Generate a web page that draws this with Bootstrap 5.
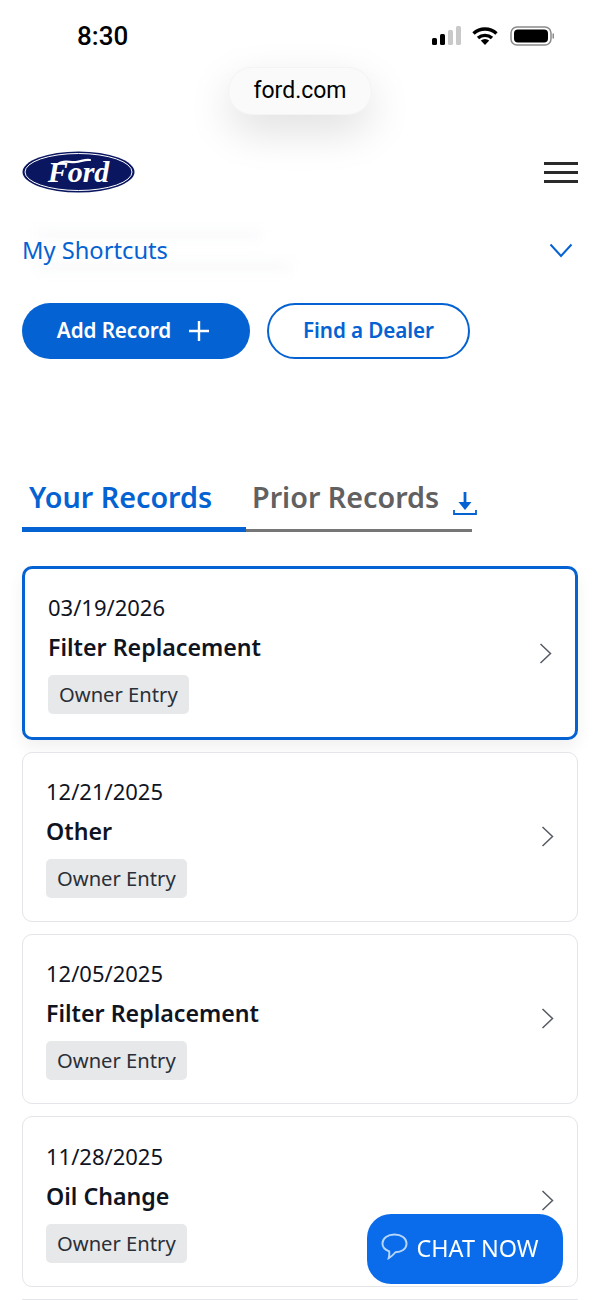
<!DOCTYPE html>
<html lang="en">
<head>
    <meta charset="UTF-8" />
    <meta name="viewport" content="width=device-width, initial-scale=1.0"/>
    <title>Ford - Service Records</title>
    <link href="https://cdn.jsdelivr.net/npm/bootstrap@5.3.2/dist/css/bootstrap.min.css" rel="stylesheet"/>
    <style>
        html, body { height: 1300px; overflow: hidden; }
        body { font-family: "Noto Sans", "Open Sans", sans-serif; color: #10141f; background: #fff; }
        .status-row { height: 67px; padding: 21px 45px 0 77px; }
        .status-time { font-family: Roboto, sans-serif; font-weight: 500; font-size: 26px; line-height: 30px; color: #000; }
        .url-wrap { height: 84px; }
        .url-pill { width: 144px; height: 48px; padding-top: 1px; border-radius: 24px; background: #fafafa; border: 1px solid #f4f4f4; box-shadow: 0 16px 44px rgba(0,0,0,.13); font-family: Roboto, sans-serif; font-size: 23px; color: #000; }
        .top-row { height: 42px; padding: 0 22px; }
        .ford-text { font-family: "Liberation Serif", serif; font-style: italic; font-weight: 700; font-size: 30px; fill: #fff; }
        .burger { width: 34px; }
        .burger span { display: block; height: 3px; background: #2a2a2a; margin-bottom: 6px; }
        .burger span:last-child { margin-bottom: 0; }
        .shortcut-row { position: relative; margin-top: 37px; height: 40px; padding: 0 22px; }
        .ghost-line { position: absolute; left: 36px; height: 9px; background: #f8f9fb; filter: blur(6px); }
        .ghost-one { top: 0; width: 225px; }
        .ghost-two { top: 32px; width: 255px; }
        .shortcut-title { position: relative; font-size: 23.7px; line-height: 40px; color: #0562d2; }
        .shortcut-arrow { margin-right: 5px; }
        .action-row { margin-top: 33px; padding: 0 22px; gap: 17px; }
        .btn-ford { height: 56px; border-radius: 28px; font-size: 20.7px; font-weight: 600; padding: 0; display: flex; align-items: center; justify-content: center; letter-spacing: -.1px; }
        .btn-add { width: 228px; padding-right: 5px; background: #0562d2; color: #fff; gap: 17px; border: 0; }
        .btn-add:hover { background: #0562d2; color: #fff; }
        .btn-dealer { width: 203px; background: #fff; color: #0562d2; border: 2px solid #0562d2; }
        .tab-row { margin: 111px 0 0 22px; width: 450px; height: 62px; }
        .tab-item { font-size: 28.7px; font-weight: 600; line-height: 54px; height: 62px; white-space: nowrap; }
        .tab-on { width: 224px; padding-left: 7px; color: #0562d2; border-bottom: 5px solid #0562d2; }
        .tab-off { width: 226px; padding-left: 6px; color: #616161; border-bottom: 3px solid #767676; position: relative; }
        .tab-download { position: absolute; right: -5px; top: 22px; }
        .record-list { margin-top: 34px; padding: 0 22px; gap: 12px; }
        .record-card { height: 170px; border: 1.5px solid #e3e5e8; border-radius: 10px; padding: 22px 23px 0; }
        .record-active { height: 174px; padding: 22px 24px 0 23px; border: 3px solid #0562d2; box-shadow: 0 8px 16px rgba(0,0,0,.06); }
        .record-last { height: 171px; padding-top: 23px; }
        .record-peek { height: 2px; padding: 0; border-bottom: 0; }
        .record-date { font-size: 22px; line-height: 32px; }
        .record-title { font-size: 23.2px; line-height: 32px; font-weight: 600; margin-top: 8px; }
        .record-chip { display: inline-block; margin-top: 12px; height: 39px; padding: 0 11px; border-radius: 5px; background: #e6e8ea; font-size: 20.2px; line-height: 39px; color: #2b2f38; }
        .record-arrow { position: absolute; right: 23px; top: 73px; }
        .record-active .record-arrow { top: 74px; }
        .chat-btn { position: fixed; left: 367px; top: 1214px; width: 196px; height: 70px; padding: 0 10px 0 0; border-radius: 24px; background: #0a6ceb; color: #fff; font-size: 23.4px; gap: 8px; z-index: 5; }
        .chat-icon { margin-bottom: 7px; }
    </style>
</head>
<body>
    <div class="status-row d-flex justify-content-between">
        <span class="status-time">8:30</span>
        <svg class="mt-1" width="124" height="22" viewBox="0 0 124 22">
            <rect x="1" y="13" width="5" height="7" rx="1.5" fill="#000"/>
            <rect x="9" y="9" width="5" height="11" rx="1.5" fill="#000"/>
            <rect x="17" y="5" width="5" height="15" rx="1.5" fill="#c9c9c9"/>
            <rect x="25" y="1" width="5" height="19" rx="1.5" fill="#c9c9c9"/>
            <path d="M42.5 8.5a17 17 0 0 1 23 0" fill="none" stroke="#000" stroke-width="3.4"/>
            <path d="M47 13a10.5 10.5 0 0 1 14 0" fill="none" stroke="#000" stroke-width="3.4"/>
            <path d="M54 20l-4.2-4.4a6 6 0 0 1 8.4 0z" fill="#000"/>
            <rect x="80" y="2" width="40" height="18" rx="6" fill="none" stroke="#8a8a8a" stroke-width="1.5"/>
            <rect x="83" y="4.5" width="34" height="13" rx="4" fill="#000"/>
            <rect x="121.500" y="8.500" width="1.500" height="5" fill="#8a8a8a"/>
        </svg>
    </div>

    <div class="url-wrap d-flex justify-content-center">
        <div class="url-pill d-flex align-items-center justify-content-center">ford.com</div>
    </div>

    <div class="top-row d-flex justify-content-between align-items-center">
        <svg width="113" height="42" viewBox="0 0 113 42">
            <ellipse cx="56.500" cy="21" rx="56" ry="20.500" fill="#0a1660"/>
            <ellipse cx="56.500" cy="21" rx="53.500" ry="18.500" fill="none" stroke="#fff" stroke-width="1"/>
            <text class="ford-text" x="56.500" y="31" text-anchor="middle">Ford</text>
            <path d="M36 13c6-5 12-1 18-2s10-3 14-2" fill="none" stroke="#fff" stroke-width="2.200" stroke-linecap="round"/>
        </svg>
        <div class="burger"><span></span><span></span><span></span></div>
    </div>

    <div class="shortcut-row d-flex justify-content-between align-items-center">
        <div class="ghost-line ghost-one"></div>
        <div class="ghost-line ghost-two"></div>
        <span class="shortcut-title">My Shortcuts</span>
        <svg class="shortcut-arrow" width="24" height="15" viewBox="0 0 24 15"><path d="M1.500 1.500L12 13 22.500 1.500" fill="none" stroke="#0562d2" stroke-width="2"/></svg>
    </div>

    <div class="action-row d-flex">
        <button class="btn btn-ford btn-add">Add Record
            <svg width="22" height="22" viewBox="0 0 22 22"><path d="M11 1v20M1 11h20" stroke="#fff" stroke-width="2.4"/></svg>
        </button>
        <button class="btn btn-ford btn-dealer">Find a Dealer</button>
    </div>

    <div class="tab-row d-flex">
        <div class="tab-item tab-on">Your Records</div>
        <div class="tab-item tab-off">Prior Records
            <svg class="tab-download" width="24" height="24" viewBox="0 0 24 24">
                <path d="M12 0v12" stroke="#0562d2" stroke-width="2.800"/>
                <path d="M5.500 10h13L12 18z" fill="#0562d2"/>
                <path d="M1 18v4h22v-4" fill="none" stroke="#0562d2" stroke-width="1.800"/>
            </svg>
        </div>
    </div>

    <div class="record-list d-flex flex-column" id="records"></div>

    <a class="chat-btn btn d-flex align-items-center justify-content-center">
        <svg class="chat-icon" width="27" height="28" viewBox="0 0 28 28"><path d="M14 2c7 0 12.500 3.800 12.500 9.500S21 20.500 15 20.500c-2 2.500-4.500 4.500-7 6 .5-2 .8-4 .5-7C4 18 1.500 15 1.500 11.500 1.500 6 7 2 14 2z" fill="none" stroke="#b5d5fb" stroke-width="2"/></svg>
        CHAT NOW
    </a>

    <script>
        const records = [
            { date: "03/19/2026", title: "Filter Replacement", extra: "record-active" },
            { date: "12/21/2025", title: "Other" },
            { date: "12/05/2025", title: "Filter Replacement" },
            { date: "11/28/2025", title: "Oil Change", extra: "record-last" }
        ];

        // last card only peeks in at the bottom edge, so no text in it
        document.getElementById("records").innerHTML = records.map(r => `
            <div class="card record-card ${r.extra || ""}">
                <div class="record-date">${r.date}</div>
                <div class="record-title">${r.title}</div>
                <div><span class="record-chip">Owner Entry</span></div>
                <svg class="record-arrow" width="13" height="21" viewBox="0 0 13 21"><path d="M1.500 1l10 9.500-10 9.500" fill="none" stroke="#555a63" stroke-width="1.500"/></svg>
            </div>`).join("") + `<div class="card record-card record-peek"></div>`;
    </script>
</body>
</html>
